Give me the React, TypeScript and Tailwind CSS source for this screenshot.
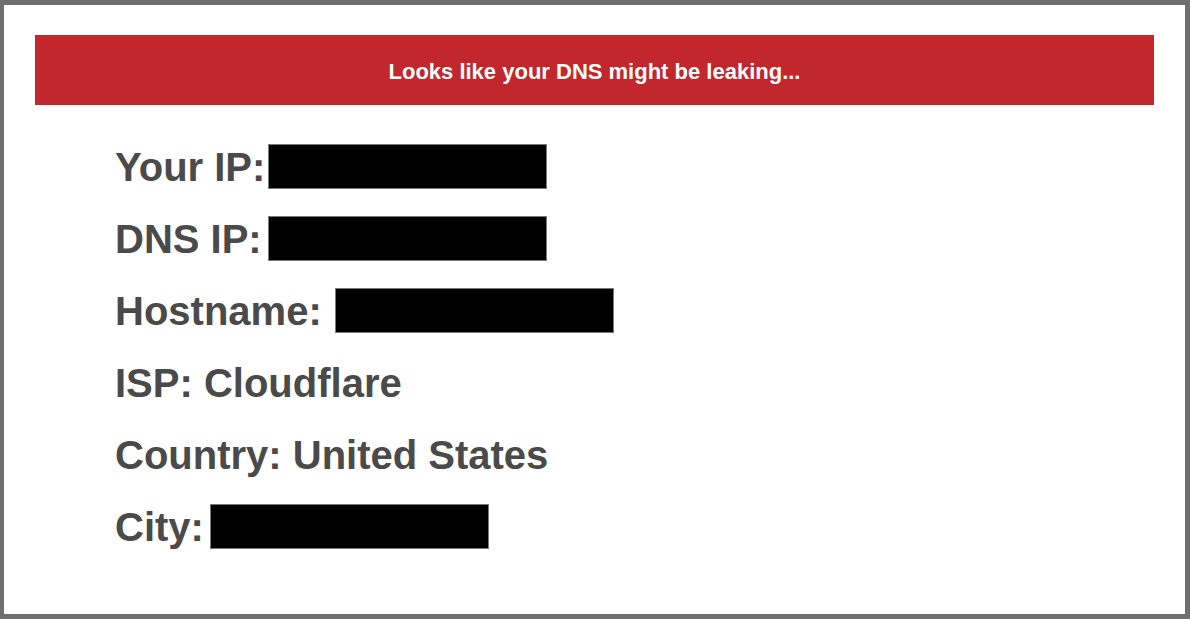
import React from "react";

function Box({ ml }: { ml: string }) {
  return <div className={`h-[45px] w-[279px] shrink-0 border border-[#7a7a7a] bg-black ${ml}`} />;
}

export default function App() {
  const font = { fontFamily: '"Liberation Sans", Arial, sans-serif' };
  return (
    <div
      className="box-border h-[619px] w-[1190px] border-[5px] border-l-[4px] border-[#6f6f6f] bg-white"
      style={font}
    >
      <div className="px-[31px] pt-[30px]">
        <div className="flex h-[70px] items-center justify-center bg-[#c1272d] pt-[2px] text-[22px] font-bold text-white">
          Looks like your DNS might be leaking...
        </div>
        <div className="mt-[39px] flex flex-col gap-[27px] pl-[80px] text-[40px] font-bold leading-[40px] text-[#4a4a4a]">
          <div className="flex h-[45px] items-center">
            <span>Your IP:</span>
            <Box ml="ml-[3px]" />
          </div>
          <div className="flex h-[45px] items-center">
            <span>DNS IP:</span>
            <Box ml="ml-[6px]" />
          </div>
          <div className="flex h-[45px] items-center">
            <span>Hostname:</span>
            <Box ml="ml-[13px]" />
          </div>
          <div className="flex h-[45px] items-center">
            <span>ISP: Cloudflare</span>
          </div>
          <div className="flex h-[45px] items-center">
            <span>Country: United States</span>
          </div>
          <div className="flex h-[45px] items-center">
            <span>City:</span>
            <Box ml="ml-[6px]" />
          </div>
        </div>
      </div>
    </div>
  );
}
